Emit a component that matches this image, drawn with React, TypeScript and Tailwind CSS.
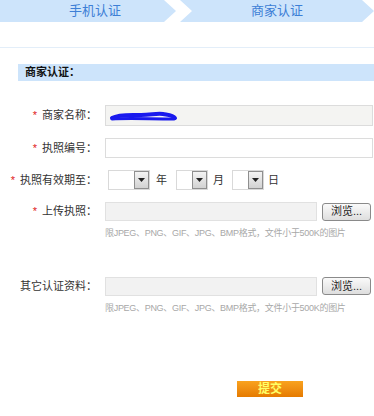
import React from "react";

const font = { fontFamily: '"Liberation Sans", "Noto Sans CJK SC", sans-serif' };

function Select({ w }: { w: string }) {
  return (
    <div className={`flex h-[20px] ${w} border border-[#d9d9d9] bg-white`}>
      <div className="flex-1" />
      <div className="flex w-[15px] items-center justify-center border border-[#8f8f8f] bg-gradient-to-b from-[#f4f4f4] to-[#d2d2d2]">
        <svg width="7" height="4" viewBox="0 0 7 4">
          <path d="M0 0h7L3.5 4z" fill="#222" />
        </svg>
      </div>
    </div>
  );
}

function Label({ text, star }: { text: string; star?: boolean }) {
  return (
    <div className="flex w-[100px] shrink-0 justify-end pr-[3px] text-[11px] text-[#333]">
      {star && <span className="mr-[5px] text-[#e02020]">*</span>}
      {text}
    </div>
  );
}

function Upload() {
  return (
    <div className="flex items-center gap-[5px]">
      <div className="h-[19px] w-[212px] border border-[#e1e1e1] bg-[#f2f2f2]" />
      <button className="h-[18px] w-[49px] rounded-[3px] border border-[#8a8a8a] bg-gradient-to-b from-[#fafafa] to-[#dedede] text-[11px] leading-none text-[#222]">
        浏览...
      </button>
    </div>
  );
}

function Hint() {
  return (
    <div className="ml-[105px] mt-[6px] text-[9px] tracking-[-0.3px] text-[#a8a8a8]">
      限JPEG、PNG、GIF、JPG、BMP格式，文件小于500K的图片
    </div>
  );
}

export default function App() {
  return (
    <div className="h-[416px] w-[374px] overflow-hidden bg-white" style={font}>
      <div className="flex h-[22px]">
        <div className="flex h-[22px] w-[176px] items-center justify-center bg-[#cde4fb] pl-[14px] text-[13px] text-[#3d7fd6] [clip-path:polygon(0_0,164px_0,176px_11px,164px_22px,0_22px)]">
          手机认证
        </div>
        <div className="ml-[4px] flex h-[22px] w-[194px] items-center justify-center bg-[#cde4fb] text-[13px] text-[#3d7fd6] [clip-path:polygon(0_0,182px_0,194px_11px,182px_22px,0_22px,12px_11px)]">
          商家认证
        </div>
      </div>
      <div className="mt-[25px] h-px w-full bg-[#e3eef9]" />
      <div className="ml-[18px] mt-[16px] flex h-[17px] items-center bg-[#cde4fb] pl-[7px] text-[11px] font-bold text-[#111]">
        商家认证：
      </div>

      <div className="mt-[24px] flex flex-col">
        <div className="flex items-center">
          <Label text="商家名称：" star />
          <div className="relative ml-[5px] h-[21px] w-[268px] border border-[#dcdcdc] bg-[#f4f4f2]">
            <svg className="absolute left-[3px] top-[4px]" width="70" height="12" viewBox="0 0 70 12">
              <path d="M3 8 C10 4, 22 5, 32 5 S48 3, 54 4 S64 5, 66 8" stroke="#1a1aee" strokeWidth="4" fill="none" strokeLinecap="round" />
              <path d="M3 9 C20 8, 40 9, 65 9" stroke="#1a1aee" strokeWidth="3" fill="none" strokeLinecap="round" />
            </svg>
          </div>
        </div>
        <div className="mt-[12px] flex items-center">
          <Label text="执照编号：" star />
          <div className="ml-[5px] h-[20px] w-[268px] border border-[#dcdcdc] bg-white" />
        </div>
        <div className="mt-[12px] flex items-center text-[11px] text-[#333]">
          <Label text="执照有效期至：" star />
          <div className="ml-[8px]">
            <Select w="w-[42px]" />
          </div>
          <span className="ml-[6px]">年</span>
          <div className="ml-[9px]">
            <Select w="w-[32px]" />
          </div>
          <span className="ml-[5px]">月</span>
          <div className="ml-[8px]">
            <Select w="w-[32px]" />
          </div>
          <span className="ml-[4px]">日</span>
        </div>
        <div className="mt-[12px] flex items-center">
          <Label text="上传执照：" star />
          <div className="ml-[5px]">
            <Upload />
          </div>
        </div>
        <Hint />
        <div className="mt-[36px] flex items-center">
          <Label text="其它认证资料：" />
          <div className="ml-[5px]">
            <Upload />
          </div>
        </div>
        <Hint />
      </div>

      <div className="mt-[66px] flex pl-[237px]">
        <button className="h-[16px] w-[66px] bg-gradient-to-b from-[#f9a21e] to-[#e57a00] text-[12px] font-bold leading-none text-[#ffff66]">
          提交
        </button>
      </div>
    </div>
  );
}
